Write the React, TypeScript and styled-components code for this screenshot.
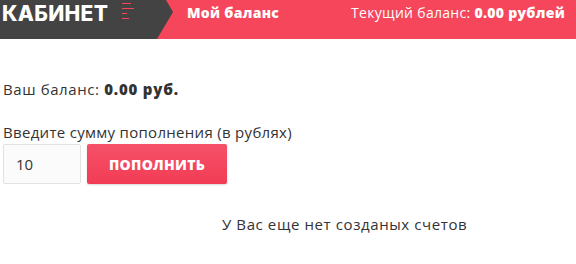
import React, { useState } from 'react';
import styled, { createGlobalStyle } from 'styled-components';

const GlobalStyle = createGlobalStyle`
  html, body {
    margin: 0;
    padding: 0;
    background: #ffffff;
    font-family: "Open Sans", "Noto Sans", sans-serif;
  }
`;

const Header = styled.header`
  display: flex;
  align-items: stretch;
  height: 39px;
  background-color: #f5465b;
  color: #ffffff;
`;

const Brand = styled.div`
  display: flex;
  align-items: center;
  width: 173px;
  padding-left: 2px;
  box-sizing: border-box;
  background-color: #434343;
  clip-path: polygon(0 0, 166px 0, 173px 12px, 157px 39px, 0 39px);
`;

const BrandTitle = styled.span`
  font-family: Inter, "Open Sans", sans-serif;
  font-size: 21px;
  font-weight: 800;
  letter-spacing: 0.3px;
  margin-top: -12px;
`;

const MenuIcon = styled.svg`
  margin-left: 14px;
  margin-top: -20px;
`;

const Title = styled.div`
  font-weight: 800;
  font-size: 14px;
  letter-spacing: 0.3px;
  margin-left: 14px;
  margin-top: 3px;
`;

const Current = styled.div`
  margin-left: auto;
  margin-right: 11px;
  margin-top: 3px;
  font-size: 14px;
  letter-spacing: 0.3px;

  b {
    font-weight: 800;
  }
`;

const Content = styled.main`
  padding: 40px 3px 0;
  color: #333333;
  font-size: 15px;
  letter-spacing: 0.3px;
`;

const Balance = styled.p`
  margin: 0 0 23px;
  line-height: 20px;
  letter-spacing: 0.6px;

  b {
    font-weight: 800;
    letter-spacing: 0.8px;
  }
`;

const Label = styled.div`
  line-height: 20px;
  margin-bottom: 2px;
`;

const Form = styled.form`
  display: flex;
  gap: 6px;
`;

const AmountInput = styled.input`
  width: 78px;
  height: 40px;
  box-sizing: border-box;
  border: 1px solid #e2e2e2;
  border-radius: 2px;
  background: #fbfbfb;
  padding: 0 12px;
  font-family: "Open Sans", sans-serif;
  font-size: 15px;
  color: #333333;
  outline: none;
`;

const PayButton = styled.button`
  width: 140px;
  height: 40px;
  border: none;
  border-radius: 2px;
  background: linear-gradient(#f55168, #f23c55);
  color: #ffffff;
  font-family: "Open Sans", sans-serif;
  font-weight: 800;
  font-size: 14px;
  letter-spacing: 0.3px;
  box-shadow: 0 1px 2px rgba(0, 0, 0, 0.15);
  cursor: pointer;
`;

const Empty = styled.p`
  margin: 30px 0 0 219px;
  line-height: 20px;
  letter-spacing: 0.6px;
`;

const App = () => {
  const [amount, setAmount] = useState('10');

  return (
    <>
      <GlobalStyle />
      <Header>
        <Brand>
          <BrandTitle>КАБИНЕТ</BrandTitle>
          <MenuIcon width="14" height="18" viewBox="0 0 14 18">
            <rect x="0" y="2" width="9" height="1" fill="#f5465b" />
            <rect x="0" y="7" width="12" height="1" fill="#f5465b" />
            <rect x="0" y="12" width="5" height="1" fill="#f5465b" />
            <rect x="0" y="17" width="7" height="1" fill="#f5465b" />
          </MenuIcon>
        </Brand>
        <Title>Мой баланс</Title>
        <Current>
          Текущий баланс: <b>0.00 рублей</b>
        </Current>
      </Header>
      <Content>
        <Balance>
          Ваш баланс: <b>0.00 руб.</b>
        </Balance>
        <Label>Введите сумму пополнения (в рублях)</Label>
        <Form onSubmit={(e) => e.preventDefault()}>
          <AmountInput value={amount} onChange={(e) => setAmount(e.target.value)} />
          <PayButton type="submit">ПОПОЛНИТЬ</PayButton>
        </Form>
        <Empty>У Вас еще нет созданых счетов</Empty>
      </Content>
    </>
  );
};

export default App;
